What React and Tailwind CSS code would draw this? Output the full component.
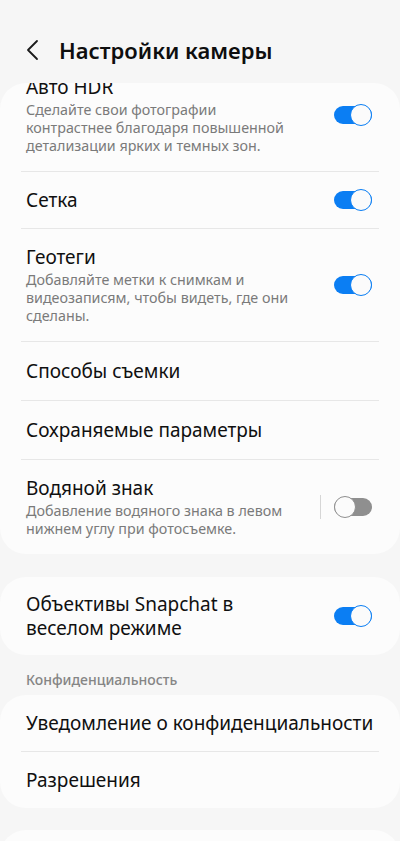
import { Fragment } from 'react'

const font = { fontFamily: '"Noto Sans", Roboto, sans-serif' }

function Toggle({ on }) {
  if (on) {
    return (
      <div className="flex items-center justify-end w-[38px] h-[18px] rounded-full bg-[#0b7ef3]">
        <div className="w-[22px] h-[22px] rounded-full bg-[#fbfbfb] border-[1.5px] border-[#0b7ef3]" />
      </div>
    )
  }
  return (
    <div className="flex items-center justify-start w-[38px] h-[18px] rounded-full bg-[#8f8f8f]">
      <div className="w-[22px] h-[22px] rounded-full bg-[#fbfbfb] border-[1.5px] border-[#8f8f8f]" />
    </div>
  )
}

function Row({ title, desc, toggle, separator, className = 'py-4' }) {
  return (
    <div className={`flex items-center pl-[26px] pr-[28px] ${className}`}>
      <div className="flex-1 min-w-0">
        <div className="text-[19px] leading-[24px] text-[#101010] whitespace-nowrap">{title}</div>
        {desc && (
          <div className="mt-[2px] text-[14.3px] leading-[18px] text-[#7a7a7a]">{desc}</div>
        )}
      </div>
      {separator && <div className="w-px h-[24px] bg-[#d6d6d6] mr-[13px]" />}
      {toggle !== undefined && <Toggle on={toggle} />}
    </div>
  )
}

const Divider = () => <div className="mx-[21px] h-px bg-[#e7e7e7]" />

export default function App() {
  const main = [
    {
      title: 'Авто HDR',
      desc: (
        <>Сделайте свои фотографии<br />контрастнее благодаря повышенной<br />детализации ярких и темных зон.</>
      ),
      toggle: true,
      className: 'py-4 mt-[-24px]',
    },
    { title: 'Сетка', toggle: true },
    {
      title: 'Геотеги',
      desc: (
        <>Добавляйте метки к снимкам и<br />видеозаписям, чтобы видеть, где они<br />сделаны.</>
      ),
      toggle: true,
    },
    { title: 'Способы съемки', className: 'py-[17px]' },
    { title: 'Сохраняемые параметры', className: 'py-[17px]' },
    {
      title: 'Водяной знак',
      desc: <>Добавление водяного знака в левом<br />нижнем углу при фотосъемке.</>,
      toggle: false,
      separator: true,
    },
  ]

  return (
    <div className="h-[841px] overflow-hidden bg-[#f6f6f6]" style={font}>
      <div className="h-[83px] flex items-end pb-[19px]">
        <div className="flex items-center">
          <svg width="14" height="22" viewBox="0 0 14 22" className="ml-[26px] mr-[19px]">
            <polyline points="11,2 2,11 11,20" fill="none" stroke="#1a1a1a" strokeWidth="1.8" strokeLinecap="round" strokeLinejoin="round" />
          </svg>
          <div className="text-[22px] leading-[28px] font-semibold text-[#0e0e0e]">Настройки камеры</div>
        </div>
      </div>

      <div className="bg-[#fcfcfc] rounded-[26px] overflow-hidden">
        {main.map((r, i) => (
          <Fragment key={r.title}>
            {i > 0 && <Divider />}
            <Row {...r} />
          </Fragment>
        ))}
      </div>

      <div className="mt-[23px] bg-[#fcfcfc] rounded-[26px]">
        <div className="flex items-center pl-[26px] pr-[28px] py-[15px]">
          <div className="flex-1 text-[19px] leading-[24px] text-[#101010]">
            Объективы Snapchat в<br />веселом режиме
          </div>
          <Toggle on />
        </div>
      </div>

      <div className="pl-[26px] pt-[17px] pb-[7px] text-[14px] leading-[16px] font-medium text-[#858585]">
        Конфиденциальность
      </div>

      <div className="bg-[#fcfcfc] rounded-[26px]">
        <Row title="Уведомление о конфиденциальности" className="py-4 pr-[20px]" />
        <Divider />
        <Row title="Разрешения" />
      </div>

      <div className="mt-[22px] bg-[#fcfcfc] rounded-[26px] h-[60px]" />
    </div>
  )
}
